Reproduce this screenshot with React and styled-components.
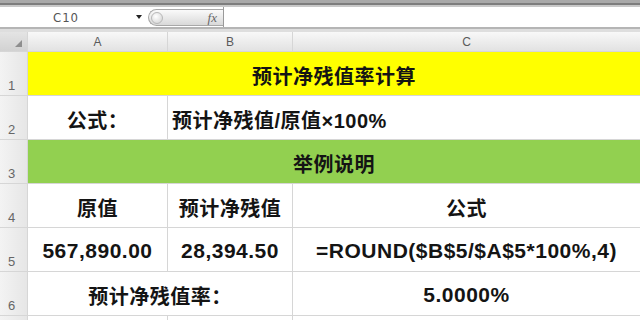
import React from 'react'
import styled, { createGlobalStyle } from 'styled-components'

const GlobalStyle = createGlobalStyle`
  html, body {
    margin: 0;
    padding: 0;
    background: #ffffff;
    overflow: hidden;
  }
  body {
    font-family: "Liberation Sans", "Noto Sans CJK SC", sans-serif;
  }
`

const Window = styled.div`
  width: 640px;
  height: 320px;
  overflow: hidden;
  display: flex;
  flex-direction: column;
  background: #fff;
`

const Chrome = styled.div`
  height: 7px;
  flex-shrink: 0;
  background: linear-gradient(#a9a9a9 0, #a9a9a9 3px, #7d7d7d 3px, #7d7d7d 5px, #c8c8c8 5px);
`

const FormulaBar = styled.div`
  height: 20px;
  flex-shrink: 0;
  display: flex;
  align-items: stretch;
  background: #fff;
`

const NameBox = styled.div`
  width: 148px;
  position: relative;
  display: flex;
  align-items: center;
  justify-content: center;
  padding-right: 16px;
  box-sizing: border-box;
  font-family: "DejaVu Sans Condensed", "Liberation Sans", sans-serif;
  font-size: 13px;
  letter-spacing: 1px;
  color: #555;
  &::after {
    content: '';
    position: absolute;
    right: 6px;
    top: 8px;
    border-left: 3.5px solid transparent;
    border-right: 3.5px solid transparent;
    border-top: 4px solid #222;
  }
`

const FxPill = styled.div`
  width: 75px;
  margin: 2px 0 1px;
  border: 1px solid #a8a8a8;
  border-right: none;
  border-radius: 10px 0 0 10px;
  background: linear-gradient(#fafafa, #d9d9d9);
  display: flex;
  align-items: center;
  justify-content: space-between;
  padding: 0 6px 0 2px;
  box-sizing: border-box;
`

const Knob = styled.span`
  width: 12px;
  height: 12px;
  border-radius: 50%;
  border: 1px solid #b8b8b8;
  background: radial-gradient(circle at 40% 35%, #fff, #d0d0d0);
  box-sizing: border-box;
`

const Fx = styled.span`
  font-family: "Liberation Serif", serif;
  font-style: italic;
  font-size: 13px;
  color: #666;
`

const FormulaInput = styled.div`
  flex: 1;
  border-left: 1px solid #9a9a9a;
  background: #fff;
`

const Gap = styled.div`
  height: 5px;
  flex-shrink: 0;
  background: linear-gradient(#b5b5b5 0, #b5b5b5 2px, #dedede 2px);
`

const Sheet = styled.div`
  flex: 1;
  display: grid;
  grid-template-columns: 27px 139px 124px 1fr;
  grid-template-rows: 19px repeat(7, 43px);
  gap: 1px;
  background: #d6d6d6;
  overflow: hidden;
`

const Corner = styled.div`
  background: linear-gradient(#e4e4e4, #d2d2d2);
  position: relative;
  &::after {
    content: '';
    position: absolute;
    right: 5px;
    bottom: 4px;
    border-left: 7px solid transparent;
    border-bottom: 7px solid #8e8e8e;
  }
`

const ColHead = styled.div`
  background: linear-gradient(#f8f8f8, #e2e2e2);
  display: flex;
  align-items: center;
  justify-content: center;
  font-size: 12px;
  color: #5a5a5a;
`

const RowHead = styled.div`
  background: linear-gradient(90deg, #f3f3f3, #e6e6e6);
  display: flex;
  align-items: flex-end;
  justify-content: center;
  padding: 0 4px 2px 0;
  font-size: 13px;
  color: #666;
`

const Cell = styled.div`
  grid-column: span ${p => p.span || 1};
  background: ${p => p.fill || '#fff'};
  display: flex;
  align-items: center;
  justify-content: ${p => (p.left ? 'flex-start' : 'center')};
  padding: 3px 0 0 ${p => (p.left ? '4px' : '0')};
  box-sizing: border-box;
  font-size: ${p => (p.latin ? '21px' : '20px')};
  font-weight: bold;
  letter-spacing: 0.5px;
  color: #141414;
  white-space: nowrap;
`

const rows = [
  [{ text: '预计净残值率计算', span: 3, fill: '#ffff00' }],
  [{ text: '公式：' }, { text: '预计净残值/原值×100%', span: 2, left: true }],
  [{ text: '举例说明', span: 3, fill: '#92d050' }],
  [{ text: '原值' }, { text: '预计净残值' }, { text: '公式' }],
  [
    { text: '567,890.00', latin: true },
    { text: '28,394.50', latin: true },
    { text: '=ROUND($B$5/$A$5*100%,4)', latin: true }
  ],
  [{ text: '预计净残值率：', span: 2 }, { text: '5.0000%', latin: true }],
  [{ text: '' }, { text: '' }, { text: '' }]
]

const App = () => (
  <Window>
    <GlobalStyle />
    <Chrome />
    <FormulaBar>
      <NameBox>C10</NameBox>
      <FxPill>
        <Knob />
        <Fx>fx</Fx>
      </FxPill>
      <FormulaInput />
    </FormulaBar>
    <Gap />
    <Sheet>
      <Corner />
      <ColHead>A</ColHead>
      <ColHead>B</ColHead>
      <ColHead>C</ColHead>
      {rows.map((row, i) => (
        <React.Fragment key={i}>
          <RowHead>{i < 6 ? i + 1 : ''}</RowHead>
          {row.map((c, j) => (
            <Cell key={j} span={c.span} fill={c.fill} left={c.left} latin={c.latin}>
              {c.text}
            </Cell>
          ))}
        </React.Fragment>
      ))}
    </Sheet>
  </Window>
)

export default App
